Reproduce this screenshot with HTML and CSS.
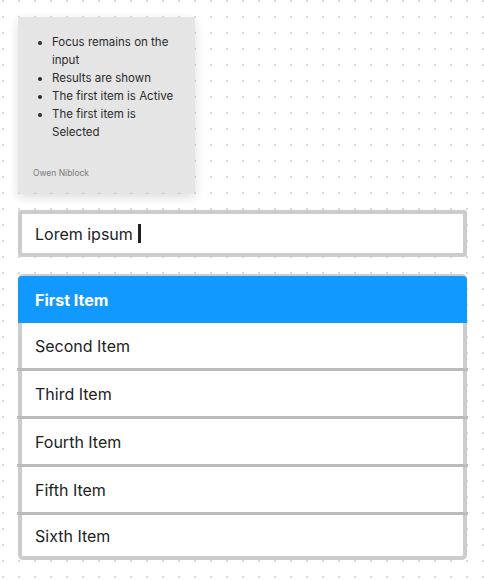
FILE: index.html
```html
<!DOCTYPE html>
<html lang="en">
<head>
  <meta charset="UTF-8">
  <meta name="viewport" content="width=device-width, initial-scale=1.0">
  <title>Autocomplete - focus state</title>
  <link rel="stylesheet" href="styles.css">
</head>
<body>
  <div class="note">
    <ul class="note-list">
      <li>Focus remains on the input</li>
      <li>Results are shown</li>
      <li>The first item is Active</li>
      <li>The first item is Selected</li>
    </ul>
    <p class="note-author">Owen Niblock</p>
  </div>

  <div class="search">
    <span class="search-text">Lorem ipsum</span><span class="caret"></span>
  </div>

  <ul class="results">
    <li class="result active">First Item</li>
    <li class="result">Second Item</li>
    <li class="result">Third Item</li>
    <li class="result">Fourth Item</li>
    <li class="result">Fifth Item</li>
    <li class="result">Sixth Item</li>
  </ul>
</body>
</html>
```

FILE: styles.css
```css
body {
  margin: 0;
  padding: 17px 17px 0 18px;
  font-family: Inter, 'Noto Sans', sans-serif;
  color: #222;
  background-color: #fff;
  background-image: radial-gradient(circle, #d9d9d9 0.9px, transparent 1.2px);
  background-size: 16px 16px;
  background-position: -5px -7px;
  height: 580px;
  box-sizing: border-box;
}
.note {
  width: 177px;
  height: 176px;
  box-sizing: border-box;
  background-color: #e5e5e5;
  padding: 16px 15px 0 15px;
  box-shadow: 0 4px 10px rgba(0,0,0,0.14);
  display: flex;
  flex-direction: column;
}
.note-list {
  margin: 0;
  padding-left: 19px;
  font-size: 11.5px;
  line-height: 18px;
  color: #2b2b2b;
}
.note-author {
  margin: auto 0 15px 0;
  font-size: 8.5px;
  color: #7a7a7a;
}
.search {
  margin-top: 17px;
  height: 47px;
  box-sizing: border-box;
  border: 4px solid #cccccc;
  border-radius: 3px;
  background: #fff;
  padding-left: 13px;
  display: flex;
  align-items: center;
  font-size: 16px;
}
.caret {
  display: inline-block;
  width: 3px;
  height: 19px;
  margin-left: 5px;
  background: #1f1f1f;
}
.results {
  list-style: none;
  margin: 17px 0 0 0;
  padding: 0;
  border: 4px solid #cccccc;
  border-radius: 5px;
  background: #fff;
}
.result {
  height: 45px;
  display: flex;
  align-items: center;
  font-size: 16px;
  border-top: 3px solid #bbbbbb;
  margin: 0 -5px;
  padding-left: 18px;
}
.result:nth-child(2) {
  border-top: none;
}
.result:last-child {
  height: 41px;
}
.result.active {
  background: #1199ff;
  color: #fff;
  font-weight: 700;
  height: 47px;
  border-top: none;
  margin: -2px -4px 0 -4px;
  padding-left: 17px;
  border-radius: 4px 4px 0 0;
}
```
